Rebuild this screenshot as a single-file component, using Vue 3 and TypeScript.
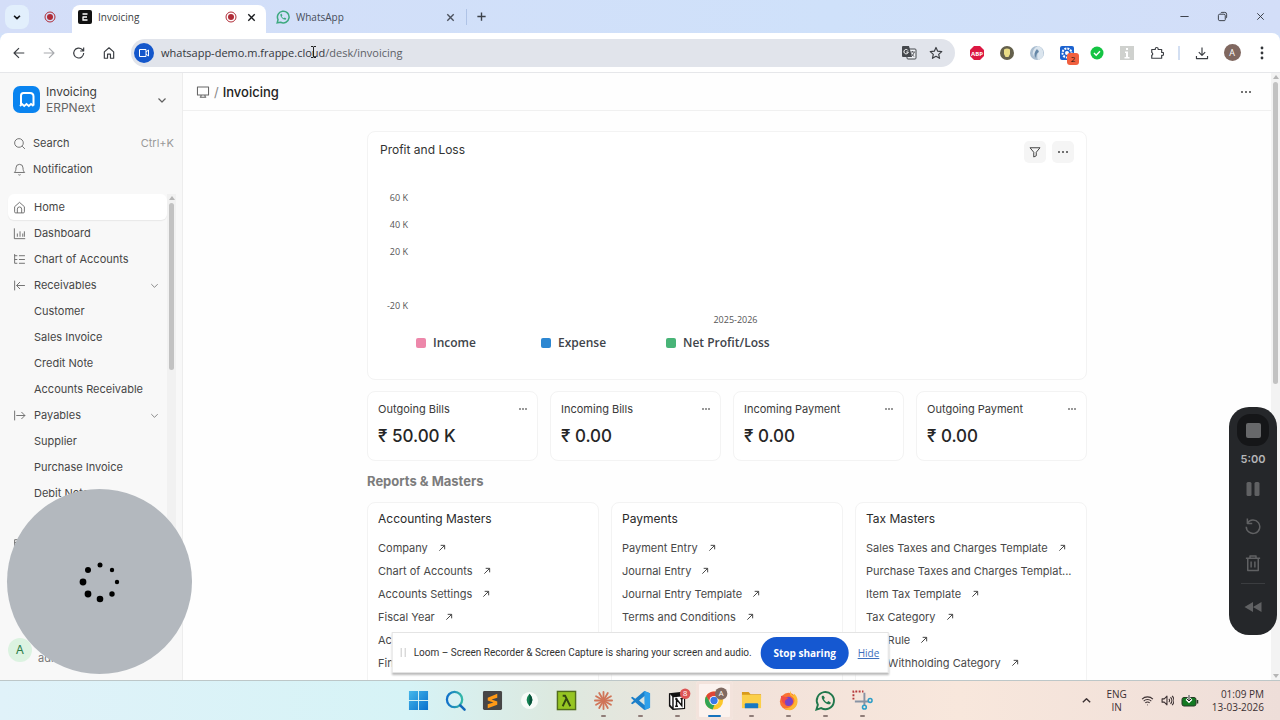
<script setup lang="ts">
import { h, type FunctionalComponent } from 'vue'

const strokes: Record<string, string> = {
  chevron: 'M5 9l7 7 7-7',
  chevronUp: 'M4 16l8-8 8 8',
  close: 'M5 5l14 14M19 5L5 19',
  plus: 'M12 3v18M3 12h18',
  minimise: 'M3 12h18',
  restore: 'M6 7h9a3 3 0 0 1 3 3v9a2 2 0 0 1-2 2H6a3 3 0 0 1-3-3v-8a3 3 0 0 1 3-3zM8 4.500q1-1.500 3-1.500h6q4 0 4 4v6q0 2-1.500 3',
  back: 'M21 12H4M12 3.500L3.500 12l8.500 8.500',
  forward: 'M3 12h17M12 3.500l8.500 8.500-8.500 8.500',
  reload: 'M20 12a8.500 8.500 0 1 1-2.500-6L20 8.500M20 2.500v6h-6',
  homeBar: 'M4 10l8-7 8 7v11h-5.500v-7h-5v7H4z',
  star: 'M12 2.500l2.900 6.400 7 .7-5.300 4.700 1.500 6.900-6.100-3.600-6.100 3.600 1.500-6.900L2.100 9.600l7-.7z',
  puzzle: 'M3 6h6V5a2.500 2.500 0 0 1 5 0v1h6v5h1a2.500 2.500 0 0 1 0 5h-1v5H3v-5a2.700 2.700 0 0 0 0-5z',
  download: 'M12 2.500v13M6.500 10.500l5.500 5.500 5.500-5.500M2.500 17v4.500h19V17',
  camera: 'M3 5h13v14H3zM16 10l5-4v12l-5-4',
  search: 'M19 11a8 8 0 1 1-16 0 8 8 0 0 1 16 0M17 17l5 5',
  bell: 'M2.500 17.500h19C19.500 15.500 18.500 13.500 18.500 9a6.500 6.500 0 0 0-13 0c0 4.500-1 6.500-3 8.500zM10 21.500q2 1.500 4 0',
  home: 'M3 10.500l9-8 9 8V20a2 2 0 0 1-2 2H5a2 2 0 0 1-2-2zM8 22v-7a4 4 0 0 1 8 0v7',
  dashboard: 'M2.500 2.500v19h20M8 12v6M13 8v10M18 12v6M21 8v10',
  tree: 'M3 2v17h5M3 5h5M3 12h5M11 5h11M11 12h11M11 19h11',
  receive: 'M3 3v18M22 12H7M13 5.500L6.500 12l6.500 6.500',
  pay: 'M3 3v18M6 12h16M15.500 5.500L22 12l-6.500 6.500',
  card: 'M3 5h18v15H3zM3 10h18',
  monitor: 'M2.500 3.500h19v13.500h-19zM9 17l-1 4M15 17l1 4M6.500 21h11',
  filter: 'M2 3.500h20l-7.500 9v7L9.500 22v-9.500z',
  arrow: 'M4 20L20 4M8 4h12v12',
  undo: 'M4.500 8A9 9 0 1 1 3 13M4.500 2v6.500H11',
  trash: 'M2.500 5.500h19M8 5V2.500h8V5M5 6v16h14V6M9.500 10v8M14.500 10v8',
  wifi: 'M2 9.500a14 14 0 0 1 20 0M5 13a10 10 0 0 1 14 0M8 16.500a6 6 0 0 1 8 0M11.500 20h1',
  volume: 'M2 9h4l5-5v16l-5-5H2zM14.500 9a4 4 0 0 1 0 6M17.500 6a8 8 0 0 1 0 12M20.500 3.500a12 12 0 0 1 0 17',
}

const Icon: FunctionalComponent<{ name: string }> = (props) =>
  h('svg', { viewBox: '0 0 24 24', class: 'icon', 'aria-hidden': 'true' }, [h('path', { d: strokes[props.name] })])
Icon.props = ['name']

interface NavItem { label: string; icon?: string; group?: boolean; active?: boolean }
const nav: NavItem[] = [
  { label: 'Home', icon: 'home', active: true },
  { label: 'Dashboard', icon: 'dashboard' },
  { label: 'Chart of Accounts', icon: 'tree' },
  { label: 'Receivables', icon: 'receive', group: true },
  { label: 'Customer' },
  { label: 'Sales Invoice' },
  { label: 'Credit Note' },
  { label: 'Accounts Receivable' },
  { label: 'Payables', icon: 'pay', group: true },
  { label: 'Supplier' },
  { label: 'Purchase Invoice' },
  { label: 'Debit Note' },
]

const ticks = ['60 K', '40 K', '20 K', '', '-20 K']
const legend = [
  { label: 'Income', tone: 'pink' },
  { label: 'Expense', tone: 'blue' },
  { label: 'Net Profit/Loss', tone: 'green' },
]
const totals = [
  { label: 'Outgoing Bills', value: '₹ 50.00 K' },
  { label: 'Incoming Bills', value: '₹ 0.00' },
  { label: 'Incoming Payment', value: '₹ 0.00' },
  { label: 'Outgoing Payment', value: '₹ 0.00' },
]
const masters = [
  { title: 'Accounting Masters', links: ['Company', 'Chart of Accounts', 'Accounts Settings', 'Fiscal Year', 'Accounting Dimension', 'Finance Book'] },
  { title: 'Payments', links: ['Payment Entry', 'Journal Entry', 'Journal Entry Template', 'Terms and Conditions'] },
  { title: 'Tax Masters', links: ['Sales Taxes and Charges Template', 'Purchase Taxes and Charges Templat...', 'Item Tax Template', 'Tax Category', 'Tax Rule', 'Tax Withholding Category'] },
]
const spinner = [
  { x: 23, y: 6, r: 2.5 }, { x: 35, y: 11, r: 2.2 }, { x: 40, y: 23, r: 2.2 }, { x: 35, y: 35, r: 2.7 },
  { x: 23, y: 40, r: 3.3 }, { x: 11, y: 35, r: 3.4 }, { x: 6, y: 23, r: 3.4 }, { x: 11, y: 11, r: 3 },
]
const petals = Array.from({ length: 12 }, (_, i) => i * 30)
</script>

<template>
  <div class="screen">
    <header class="tabs">
      <button class="tab-search" aria-label="Search tabs"><Icon name="chevron" /></button>
      <svg class="rec pinned" viewBox="0 0 12 12"><circle cx="6" cy="6" r="5" /><circle class="dot" cx="6" cy="6" r="3" /></svg>
      <div class="tab current">
        <svg class="favicon" viewBox="0 0 14 14"><rect width="14" height="14" rx="2" fill="#111" /><path d="M4.500 4h5M4.500 7h4.500M5 7v3h4.500" fill="none" stroke="#fff" stroke-width="1.300" /></svg>
        <span>Invoicing</span>
        <svg class="rec" viewBox="0 0 12 12"><circle cx="6" cy="6" r="5" /><circle class="dot" cx="6" cy="6" r="3" /></svg>
        <button class="tab-close dark" aria-label="Close tab"><Icon name="close" /></button>
      </div>
      <div class="tab">
        <svg class="favicon" viewBox="0 0 24 24"><path d="M2 22l1.500-5.500A10 10 0 1 1 8 21z" fill="none" stroke="#3da97f" stroke-width="2.600" /><path d="M7.500 8c0 4 4.500 8.500 8.500 8.500 1 0 1.500-1 1.500-2l-2.500-1.500-1.500 1.300c-1.600-.6-3-2-3.700-3.700L11 9 9.500 6.500c-1 0-2 .5-2 1.500z" fill="#3da97f" /></svg>
        <span>WhatsApp</span>
        <button class="tab-close" aria-label="Close tab"><Icon name="close" /></button>
      </div>
      <button class="new-tab" aria-label="New tab"><Icon name="plus" /></button>
      <div class="window-buttons">
        <button aria-label="Minimise"><Icon name="minimise" /></button>
        <button aria-label="Restore"><Icon name="restore" /></button>
        <button aria-label="Close"><Icon name="close" /></button>
      </div>
    </header>

    <div class="toolbar-wrap">
      <div class="toolbar">
        <button class="tool" aria-label="Back"><Icon name="back" /></button>
        <button class="tool off" aria-label="Forward"><Icon name="forward" /></button>
        <button class="tool" aria-label="Reload"><Icon name="reload" /></button>
        <button class="tool" aria-label="Home page"><Icon name="homeBar" /></button>
        <div class="address">
          <span class="cam"><Icon name="camera" /></span>
          <a class="url" href="#">whatsapp-demo.m.frappe.cloud<span>/desk/invoicing</span></a>
          <svg class="caret" viewBox="0 0 7 12"><path d="M1 .5h2l.5.5.5-.5h2M3.500 1v10M1 11.500h2l.5-.5.5.5h2" fill="none" stroke="#222" /></svg>
          <button class="tool" aria-label="Translate">
            <svg class="glyph" viewBox="0 0 16 16"><rect x="6" y="4" width="9" height="10" rx="1" fill="#eef0f4" stroke="#45484d" /><path d="M2 1h6l3 11H2a1 1 0 0 1-1-1V2a1 1 0 0 1 1-1z" fill="#45484d" /><path d="M7 5.500A2.200 2.200 0 1 0 7.300 7H5.300" fill="none" stroke="#fff" /><path d="M9.500 7h4.500M11.500 6v1M13.300 7q-.8 3-3 4.500M10.300 8.500q1 2 3 3" fill="none" stroke="#45484d" stroke-width=".8" /></svg>
          </button>
          <button class="tool" aria-label="Bookmark"><Icon name="star" /></button>
        </div>
        <button class="tool" aria-label="Ad blocker"><svg class="glyph" viewBox="0 0 16 16"><path d="M5 1h6l4 4v6l-4 4H5l-4-4V5z" fill="#dc1842" /><text x="8" y="10.500" text-anchor="middle" class="abp">ABP</text></svg></button>
        <button class="tool" aria-label="Lamp extension"><svg class="glyph" viewBox="0 0 16 16"><circle cx="8" cy="8" r="7" fill="#64604c" /><path d="M5 4.500q3-2 6 0v4.500l-1.500 3h-3L5 9z" fill="#e9dc86" /></svg></button>
        <button class="tool" aria-label="Swirl extension"><svg class="glyph" viewBox="0 0 16 16"><circle cx="8" cy="8" r="7" fill="#a9bdd0" /><path d="M9 1Q2 4 4 12q1-6 6-7-3 5-1 10 7-2 5-9-1-4-5-5z" fill="#dbe5ee" /><path d="M8 4Q4 8 7 13q0-5 3-6z" fill="#6486a6" /></svg></button>
        <button class="tool badge-host" aria-label="Recorder extension">
          <svg class="glyph" viewBox="0 0 16 16"><rect x="1" y="1" width="14" height="14" rx="2" fill="#1c62cf" /><circle cx="8" cy="8" r="4.500" fill="none" stroke="#fff" stroke-width="2" stroke-dasharray="2 1" /><circle cx="8" cy="8" r="2" fill="#fff" /></svg>
          <span class="badge">2</span>
        </button>
        <button class="tool" aria-label="Checker extension"><svg class="glyph" viewBox="0 0 16 16"><circle cx="8" cy="8" r="6.500" fill="#14c443" /><path d="M5 8l2.200 2.200L11 6.300" fill="none" stroke="#fff" stroke-width="1.400" /></svg></button>
        <button class="tool" aria-label="Info extension"><svg class="glyph" viewBox="0 0 16 16"><rect x="1" y="1" width="14" height="14" fill="#cfd1ce" /><path d="M7 3h2v2H7zM6 6.500h3V12h1.500v1.500H5.500V12H7V8H6z" fill="#fff" /></svg></button>
        <button class="tool" aria-label="Extensions"><Icon name="puzzle" /></button>
        <span class="split"></span>
        <button class="tool" aria-label="Downloads"><Icon name="download" /></button>
        <button class="tool profile" aria-label="Profile A"><span>A</span></button>
        <button class="tool" aria-label="Menu"><svg class="glyph" viewBox="0 0 16 16" fill="#33363a"><circle cx="8" cy="3" r="1.400" /><circle cx="8" cy="8" r="1.400" /><circle cx="8" cy="13" r="1.400" /></svg></button>
      </div>
    </div>

    <div class="desk">
      <aside class="side">
        <button class="app">
          <svg class="logo" viewBox="0 0 27 27"><rect width="27" height="27" rx="7" fill="#0a84f0" /><path d="M8 18.500V9.500q0-2.500 2.500-2.500H17q3.500 0 3.500 3.500v9" fill="none" stroke="#fff" stroke-width="2" /><path d="M7 20l2-2 2.200 2 2.300-2 2.300 2 2.200-2 2.500 2" fill="none" stroke="#fff" stroke-width="1.800" /></svg>
          <span class="app-name"><b>Invoicing</b><small>ERPNext</small></span>
          <Icon name="chevron" />
        </button>
        <div class="quick">
          <button><Icon name="search" /><span>Search</span><kbd>Ctrl+K</kbd></button>
          <button><Icon name="bell" /><span>Notification</span></button>
        </div>
        <div class="nav-row">
          <nav>
            <a v-for="item in nav" :key="item.label" href="#" :class="{ active: item.active }">
              <Icon v-if="item.icon" :name="item.icon" /><i v-else></i>
              <span>{{ item.label }}</span>
              <Icon v-if="item.group" name="chevron" />
            </a>
            <a class="later" href="#" aria-label="Payments"><Icon name="card" /></a>
          </nav>
          <div class="bar"><span class="tip"></span><span class="thumb"></span></div>
        </div>
        <div class="user"><span class="avatar">A</span><span class="mail">administrator</span></div>
      </aside>

      <main>
        <div class="crumbs">
          <Icon name="monitor" /><span class="slash">/</span><h1>Invoicing</h1>
          <button aria-label="More options"><i></i><i></i><i></i></button>
        </div>
        <div class="content">
          <section class="card chart">
            <div class="card-head">
              <h2>Profit and Loss</h2>
              <button class="soft" aria-label="Filter"><Icon name="filter" /></button>
              <button class="soft" aria-label="Chart menu"><i></i><i></i><i></i></button>
            </div>
            <div class="plot">
              <ul class="axis"><li v-for="(t, i) in ticks" :key="i">{{ t }}</li></ul>
              <p>2025-2026</p>
            </div>
            <ul class="legend"><li v-for="l in legend" :key="l.label"><i :class="l.tone"></i>{{ l.label }}</li></ul>
          </section>
          <div class="totals">
            <section v-for="t in totals" :key="t.label" class="card total">
              <div><h3>{{ t.label }}</h3><button aria-label="Card menu"><i></i><i></i><i></i></button></div>
              <strong>{{ t.value }}</strong>
            </section>
          </div>
          <h2 class="heading">Reports &amp; Masters</h2>
          <div class="masters">
            <section v-for="m in masters" :key="m.title" class="card master">
              <h3>{{ m.title }}</h3>
              <a v-for="l in m.links" :key="l" href="#"><span>{{ l }}</span><Icon v-if="!l.endsWith('...')" name="arrow" /></a>
            </section>
          </div>
        </div>
      </main>
      <div class="bar page-bar"><span class="tip"></span><span class="thumb"></span><span class="tip down"></span></div>
    </div>

    <footer class="taskbar">
      <div class="apps">
        <button aria-label="Start"><svg viewBox="0 0 22 22"><defs><linearGradient id="win" x2="1" y2="1"><stop stop-color="#45b7ea" /><stop offset="1" stop-color="#0870cd" /></linearGradient></defs><path d="M1 1h9.500v9.500H1zM11.500 1H21v9.500h-9.500zM1 11.500h9.500V21H1zM11.500 11.500H21V21h-9.500z" fill="url(#win)" /></svg></button>
        <button aria-label="Search"><svg viewBox="0 0 22 22"><defs><linearGradient id="lens" x2="1"><stop stop-color="#1170cb" /><stop offset="1" stop-color="#35b9a8" /></linearGradient></defs><circle cx="10" cy="10" r="8" fill="#d9f2f4" stroke="url(#lens)" stroke-width="2.400" /><path d="M16 16l4.500 4.500" stroke="#1267b9" stroke-width="2.600" stroke-linecap="round" /></svg></button>
        <button aria-label="Sublime Text"><svg viewBox="0 0 22 22"><rect x="1" y="1" width="20" height="20" rx="1.500" fill="#474646" /><path d="M6 8l10-4v4l-6 2 6 2v3.500L6 19v-4l6-2-6-2z" fill="#ff9a16" /></svg></button>
        <button aria-label="MongoDB Compass"><svg viewBox="0 0 22 22"><circle cx="11" cy="11" r="9" fill="#f7fbf8" /><path d="M11 4q6 6.500 0 13-6-6.500 0-13z" fill="#128252" /><path d="M11 4q6 6.500 0 13z" fill="#075039" /></svg></button>
        <button aria-label="Cmder"><svg viewBox="0 0 22 22"><rect x="1.500" y="1.500" width="19" height="19" fill="#96c522" stroke="#536e1d" stroke-width="1.500" /><path d="M7 6h2.500L15 17M10.500 9.500L7 17" fill="none" stroke="#334611" stroke-width="2" /></svg></button>
        <button class="on" aria-label="Claude"><svg viewBox="0 0 22 22"><g stroke="#d07558" stroke-width="1.900" stroke-linecap="round"><line v-for="a in petals" :key="a" x1="11" y1="11" x2="11" y2="2" :transform="`rotate(${a} 11 11)`" /></g></svg></button>
        <button class="on" aria-label="Visual Studio Code"><svg viewBox="0 0 22 22"><path d="M15 1l6 2.500v15L15 21 5.500 12.800 2.500 15 1 14l3-3-3-3 1.500-1 3 2.200z" fill="#1b7fc9" /><path d="M15.500 6v10L9.500 11z" fill="#d9e3df" /><path d="M15 1l6 2.500v15L15.500 21z" fill="#2fa0ea" /></svg></button>
        <button class="on" aria-label="Notion"><svg viewBox="0 0 22 22"><path d="M2 3.500L14 2l5 3v15l-13 1-4-4z" fill="#111" /><path d="M3.500 4.500L5.500 7v11l-2-2.500z" fill="#fff" /><path d="M7 7.500L17.800 6.500v12.300L7 19.500z" fill="#fff" /><path d="M10 17V9.500l5.500 7V9M8.500 9.500h2.500M14 9h3M8.500 17h3" fill="none" stroke="#111" stroke-width="1.500" /><circle cx="19" cy="4" r="5.500" fill="#dc5454" /><text x="19" y="6.500" text-anchor="middle" class="count">8</text></svg></button>
        <button class="on chosen" aria-label="Google Chrome"><svg viewBox="0 0 22 22"><circle cx="10.500" cy="11" r="9.500" fill="#fbc62c" /><path d="M10.500 1.500A9.500 9.500 0 0 1 19 6.500h-8.500L6.400 13 2.300 6.300A9.500 9.500 0 0 1 10.500 1.500z" fill="#df4537" /><path d="M2.300 6.300l4.200 7L11 15.500l-2 5A9.500 9.500 0 0 1 2.300 6.300z" fill="#33a455" /><circle cx="10.500" cy="11" r="4.800" fill="#fff" /><circle cx="10.500" cy="11" r="3.800" fill="#3978e7" /><circle cx="18" cy="3.800" r="6.500" fill="#806a62" /><text x="18" y="6.500" text-anchor="middle" class="count">A</text></svg></button>
        <button class="on" aria-label="File Explorer"><svg viewBox="0 0 22 22"><path d="M1 2h7l2 2.500h11V8H1z" fill="#d99b1b" /><path d="M1 5h20v14H1z" fill="#fbcf49" /><path d="M4 19v-4q0-1 1-1h12q1 0 1 1v4z" fill="#1678c2" /></svg></button>
        <button class="on" aria-label="Firefox"><svg viewBox="0 0 22 22"><circle cx="11" cy="12" r="9" fill="#fb7132" /><path d="M13 1q-2 4 2 6 4 3 1 8-4 5-10 4 8 5 13-2 4-8-2-13l-1 2q-3-2-3-5z" fill="#fcb932" /><circle cx="11" cy="12" r="4.800" fill="#7843c6" /><path d="M3 6l4 1 4 1.500-3 2q-2 3 1 5-6-1-6-9.500z" fill="#f14d46" /></svg></button>
        <button class="on" aria-label="WhatsApp"><svg viewBox="0 0 22 22"><path d="M1.500 20.500L3 15.500a9 9 0 1 1 3.500 3.500z" fill="none" stroke="#20774c" stroke-width="2" /><path d="M7 7c0 4 4.500 8 8 8 1 0 1.500-1 1.500-2L14 11.500l-1.400 1.300c-1.600-.6-2.600-1.600-3.300-3.300L10.400 8.300 9 6C8 6 7 6 7 7z" fill="#20774c" /></svg></button>
        <button class="on" aria-label="Snipping Tool"><svg viewBox="0 0 22 22"><path d="M1.500 10V1.500H12" fill="none" stroke="#b5393c" stroke-width="2" stroke-dasharray="2 1.500" /><path d="M13 3v13M3 12h14" stroke="#8793a4" stroke-width="2" /><circle cx="13" cy="18" r="2" fill="none" stroke="#2e9ec7" stroke-width="1.600" /><circle cx="19" cy="11" r="2" fill="none" stroke="#2e9ec7" stroke-width="1.600" /></svg></button>
      </div>
      <div class="tray">
        <button aria-label="Hidden icons"><Icon name="chevronUp" /></button>
        <span class="lang">ENG<br />IN</span>
        <span class="status">
          <Icon name="wifi" /><Icon name="volume" />
          <svg class="battery" viewBox="0 0 18 12"><rect x="1" y="2.500" width="14" height="8.500" rx="2" fill="#137a22" stroke="#273a27" /><path d="M16.500 5v3.500" stroke="#273a27" stroke-width="1.500" /><path d="M8 0v6M5.500 4L8 6.500 10.500 4" fill="none" stroke="#fff" stroke-width="2.500" /><path d="M8 0v6M6 4l2 2 2-2" fill="none" stroke="#222" /></svg>
        </span>
        <span class="clock">01:09 PM<br />13-03-2026</span>
      </div>
    </footer>

    <div class="bubble" role="status" aria-label="Camera loading">
      <svg viewBox="0 0 46 46"><circle v-for="(d, i) in spinner" :key="i" :cx="d.x" :cy="d.y" :r="d.r" /></svg>
    </div>

    <div class="share">
      <span class="grip"></span>
      <span class="notice">Loom – Screen Recorder &amp; Screen Capture is sharing your screen and audio.</span>
      <button>Stop sharing</button>
      <a href="#">Hide</a>
    </div>

    <div class="recorder">
      <button class="stop" aria-label="Stop"><span></span></button>
      <time>5:00</time>
      <button aria-label="Pause"><svg viewBox="0 0 18 18"><rect x="2.500" y="2" width="5" height="14" rx="1.500" /><rect x="10.500" y="2" width="5" height="14" rx="1.500" /></svg></button>
      <button aria-label="Restart"><Icon name="undo" /></button>
      <button aria-label="Delete"><Icon name="trash" /></button>
      <hr />
      <button aria-label="Rewind"><svg viewBox="0 0 18 18"><path d="M9 4v10L.5 9zM17.500 4v10L9 9z" /></svg></button>
    </div>
  </div>
</template>

<style>
html, body { margin: 0; background: #fff; }
</style>

<style scoped>
* { box-sizing: border-box; }
button { border: 0; padding: 0; background: none; color: inherit; font: inherit; display: flex; align-items: center; justify-content: center; flex: none; }
a { color: inherit; text-decoration: none; }
h1, h2, h3, p, ul { margin: 0; padding: 0; list-style: none; font-weight: 400; }
svg { display: block; flex: none; }
.icon { width: 14px; height: 14px; fill: none; stroke: currentColor; stroke-width: 2; stroke-linejoin: round; }
.screen { height: 100vh; display: flex; flex-direction: column; overflow: hidden; position: relative; font-family: "Open Sans", "Noto Sans", sans-serif; font-size: 12px; color: #383838; }

.tabs { flex: none; height: 33px; display: flex; align-items: center; padding-left: 5px; background: linear-gradient(90deg, #d4def8, #cfe1fa 65%, #d3def8); }
.tab-search { width: 24px; height: 24px; border-radius: 8px; background: #e2effc; color: #17191d; }
.tab-search .icon { width: 10px; height: 10px; stroke-width: 4; }
.rec { width: 12px; height: 12px; fill: none; stroke: #b02c37; stroke-width: 1; }
.rec .dot { fill: #b02c37; stroke: none; }
.pinned { margin: 0 16px 0 15px; }
.tab { width: 200px; height: 28px; align-self: flex-end; display: flex; align-items: center; padding: 0 10px 4px; font-size: 10px; color: #474d59; }
.tab.current { width: 194px; padding: 0 9px 4px 6px; background: #fff; border-radius: 8px 8px 0 0; color: #3a3d43; }
.favicon { width: 14px; height: 14px; margin-right: 6px; }
.tab span { flex: 1; }
.tab-close { margin-left: 8px; width: 12px; height: 12px; color: #4b515d; }
.tab-close .icon { width: 11px; height: 11px; stroke-width: 3; }
.tab-close.dark { color: #17191d; }
.new-tab { width: 30px; height: 16px; border-left: 1px solid #afc3e6; color: #3c414a; }
.new-tab .icon { width: 11px; height: 11px; stroke-width: 3; }
.window-buttons { margin-left: auto; display: flex; gap: 12px; padding-right: 7px; color: #30343c; }
.window-buttons button { width: 26px; height: 26px; }
.window-buttons .icon { width: 11px; height: 11px; }

.toolbar-wrap { flex: none; background: #d2e0f9; }
.toolbar { height: 40px; display: flex; align-items: center; padding: 0 3px 0 4px; background: #fff; border-radius: 8px 8px 0 0; border-bottom: 1px solid #e6e7ea; color: #3b3e43; }
.tool { width: 30px; height: 28px; }
.glyph { width: 16px; height: 16px; }
.off { color: #a8aaae; }
.address { flex: 1; min-width: 0; height: 28px; margin: 0 7px; padding: 0 6px 0 3px; display: flex; align-items: center; border-radius: 14px; background: #e1e4eb; }
.address .tool { width: 27px; }
.cam { width: 20px; height: 20px; display: grid; place-items: center; border-radius: 50%; background: #1457cb; color: #fff; margin-right: 7px; }
.cam .icon { width: 12px; height: 12px; }
.url { flex: 1; font-size: 11px; color: #34373c; white-space: nowrap; }
.url span { color: #5d6167; }
.caret { position: absolute; left: 310px; top: 46px; width: 7px; height: 12px; }
.abp { font: 700 6px "Open Sans", sans-serif; fill: #fff; }
.badge-host { position: relative; }
.badge { position: absolute; left: 15px; top: 14px; width: 12px; height: 12px; border-radius: 3px; background: #f1603f; font-size: 8px; line-height: 12px; color: #2c1510; text-align: center; }
.split { width: 2px; height: 14px; margin: 0 7px 0 6px; background: #d3dff2; }
.profile span { width: 17px; height: 17px; border-radius: 50%; background: #806860; color: #fff; font-size: 9px; line-height: 17px; }

.desk { flex: 1; min-height: 0; display: flex; font-family: Inter, "Noto Sans", sans-serif; }
.side { width: 183px; flex: none; display: flex; flex-direction: column; background: #f8f8f8; border-right: 1px solid #ededed; color: #464646; }
.side .icon { color: #606060; stroke-width: 1.6; }
.app { margin: 11px 14px 0 13px; justify-content: flex-start; height: 31px; }
.logo { width: 27px; height: 27px; margin-right: 6px; }
.app-name { flex: 1; text-align: left; line-height: 16px; }
.app-name b, .app-name small { display: block; font-weight: 400; font-size: 12px; color: #3c3c3c; }
.app-name small { color: #666; }
.app .icon { width: 12px; height: 12px; stroke-width: 2.4; }
.quick { margin: 15px 8px 0 13px; font-size: 11px; }
.quick button { width: 100%; height: 26px; justify-content: flex-start; gap: 7px; }
.quick .icon, nav .icon { width: 13px; height: 13px; flex: none; }
kbd { margin-left: auto; font: inherit; color: #999; }
.nav-row { flex: 1; min-height: 0; margin-top: 12px; padding-right: 6px; display: flex; overflow: hidden; }
nav { flex: 1; padding-left: 8px; font-size: 11px; }
nav a { height: 26px; display: flex; align-items: center; gap: 8px; padding: 0 7px 0 5px; border-radius: 6px; white-space: nowrap; }
nav a > i { width: 13px; }
nav a span { flex: 1; }
nav a.active { background: #fff; box-shadow: 0 1px 1px #e8e8e8; }
nav a .icon:last-child:not(:first-child) { width: 11px; height: 11px; }
nav .later { margin-top: 24px; }
.bar { width: 9px; flex: none; padding: 2px 0; display: flex; flex-direction: column; align-items: center; gap: 3px; background: #f1f1f1; }
.tip { border: 3px solid transparent; border-top: 0; border-bottom: 4px solid #b5b5b5; }
.tip.down { margin-top: auto; border-bottom: 0; border-top: 4px solid #b5b5b5; }
.thumb { width: 5px; height: 167px; border-radius: 3px; background: #c2c2c2; }
.page-bar { background: #f3f3f3; }
.page-bar .thumb { height: 50%; }
.user { flex: none; display: flex; align-items: center; gap: 6px; height: 60px; padding: 0 0 0 8px; }
.avatar { width: 24px; height: 24px; border-radius: 50%; background: #dcf3e1; color: #2b7c48; line-height: 24px; text-align: center; }
.mail { padding-top: 16px; font-size: 11px; color: #777; }

main { flex: 1; min-width: 0; display: flex; flex-direction: column; background: #fefefe; overflow: hidden; }
.crumbs { flex: none; height: 38px; display: flex; align-items: center; padding: 0 20px 0 13px; border-bottom: 1px solid #f0f0f0; color: #666; }
.crumbs .icon { stroke-width: 1.8; }
.slash { margin: 0 4px; font-size: 13px; color: #888; }
h1 { font-size: 13px; font-weight: 500; color: #222; flex: 1; }
main button { gap: 2px; }
main button > i { width: 2px; height: 2px; border-radius: 50%; background: #444; }
.content { width: 100%; max-width: 720px; margin: 0 auto; padding-top: 20px; }
.card { background: #fff; border: 1px solid #f3f3f3; border-radius: 8px; }
.chart { height: 249px; padding: 9px 12px; }
.card-head { display: flex; gap: 6px; }
.card-head h2 { flex: 1; font-size: 12px; line-height: 18px; color: #333; }
.soft { width: 22px; height: 22px; border-radius: 5px; background: #f5f5f5; color: #444; }
.soft .icon { width: 12px; height: 12px; }
.plot { margin-top: 21px; font: 9px/27px "Open Sans", sans-serif; color: #555; }
.axis { width: 28px; text-align: right; }
.axis li { height: 27px; }
.plot p { text-align: center; line-height: 12px; padding-left: 17px; margin-top: -5px; }
.legend { display: flex; margin: 8px 0 0 36px; font: 12px/18px "Open Sans", sans-serif; color: #40444a; }
.legend li { width: 125px; display: flex; align-items: center; gap: 7px; white-space: nowrap; font-weight: 600; }
.legend i { width: 10px; height: 10px; border-radius: 2px; }
.pink { background: #ed87aa; }
.blue { background: #2c87d2; }
.green { background: #48b477; }
.totals { display: grid; grid-template-columns: repeat(4, 1fr); gap: 12px; margin-top: 11px; }
.total { height: 70px; padding: 8px 10px; }
.total div { display: flex; justify-content: space-between; line-height: 18px; }
.total h3 { font-size: 11px; color: #3a3a3a; }
.total button { gap: 1px; }
.total button > i { background: #777; }
.total strong { display: block; margin-top: 7px; font-size: 17px; line-height: 22px; font-weight: 500; color: #262626; }
.heading { margin: 11px 0; font-size: 13px; line-height: 19px; font-weight: 700; color: #7c7c7c; }
.masters { display: grid; grid-template-columns: repeat(3, 1fr); gap: 12px; }
.master { min-width: 0; height: 220px; padding: 6px 10px; }
.master h3 { margin-bottom: 7px; font-size: 12px; line-height: 20px; color: #2a2a2a; }
.master a { height: 23px; display: flex; align-items: center; gap: 10px; font-size: 11px; color: #484848; }
.master a span { white-space: nowrap; }
.master .icon { width: 8px; height: 8px; stroke-width: 3; }

.taskbar { flex: none; position: relative; height: 40px; display: flex; justify-content: center; border-top: 1px solid #bdc7c8; background: linear-gradient(90deg, #e0f2f9, #d6f3f6 32%, #dce9e0 43%, #f2e2da 58%, #f8e7dc 75%, #eeded9); }
.apps { display: flex; }
.apps button { width: 37px; height: 39px; position: relative; border-radius: 4px; }
.apps svg { width: 21px; height: 21px; overflow: visible; }
.apps .on::after { content: ""; position: absolute; bottom: 3px; width: 5px; height: 2px; border-radius: 1px; background: #8f7d78; }
.apps .chosen { background: #fbf2ee; box-shadow: inset 0 0 0 3px #f3e3dc; }
.apps .chosen::after { width: 13px; background: #1672bd; }
.count { font: 8px "Open Sans", sans-serif; fill: #fff; }
.tray { position: absolute; right: 16px; top: 0; height: 39px; display: flex; align-items: center; font-size: 10px; line-height: 13px; color: #3b3032; }
.tray .icon { width: 13px; height: 13px; }
.tray button .icon { width: 11px; height: 11px; stroke-width: 3; }
.lang { margin: 0 14px; text-align: center; }
.status { display: flex; align-items: center; gap: 7px; margin-right: 13px; }
.battery { width: 18px; height: 12px; }
.clock { text-align: right; }

.bubble { position: absolute; left: 7px; bottom: 46px; width: 185px; height: 185px; border-radius: 50%; background: #b3b8be; display: grid; place-items: center; }
.bubble svg { width: 46px; height: 46px; }
.share { position: absolute; left: 50%; bottom: 47px; height: 41px; transform: translateX(-50%); display: flex; align-items: center; padding: 0 8px; background: #fff; border: 1px solid #e4e4e4; box-shadow: 0 2px 2px #bbb; white-space: nowrap; font-size: 10px; color: #444; }
.notice { font: 10px Roboto, "Open Sans", sans-serif; color: #333; }
.grip { width: 5px; height: 9px; margin-right: 8px; border: solid #c9c9c9; border-width: 0 1px; }
.share button { width: 88px; height: 32px; margin: 0 9px; border-radius: 16px; background: #1558d1; color: #fff; font-weight: 700; }
.share a { color: #3d6fbd; text-decoration: underline; }
.recorder { position: absolute; right: 3px; bottom: 85px; width: 48px; height: 228px; padding: 7px 0; display: flex; flex-direction: column; align-items: center; border-radius: 20px; background: #25272a; color: #606163; }
.recorder .stop { width: 32px; height: 32px; border-radius: 13px; background: #151618; }
.stop span { width: 15px; height: 15px; border-radius: 2px; background: #67686a; }
.recorder time { font: 600 11px/16px Inter, sans-serif; color: #b5b6b8; margin: 5px 0 3px; }
.recorder button { height: 37px; }
.recorder svg { width: 18px; height: 18px; }
.recorder svg:not(.icon) { fill: #606163; }
.recorder hr { width: 24px; margin: 2px 0 4px; border: 0; border-top: 1px solid #3b3d40; }
</style>
